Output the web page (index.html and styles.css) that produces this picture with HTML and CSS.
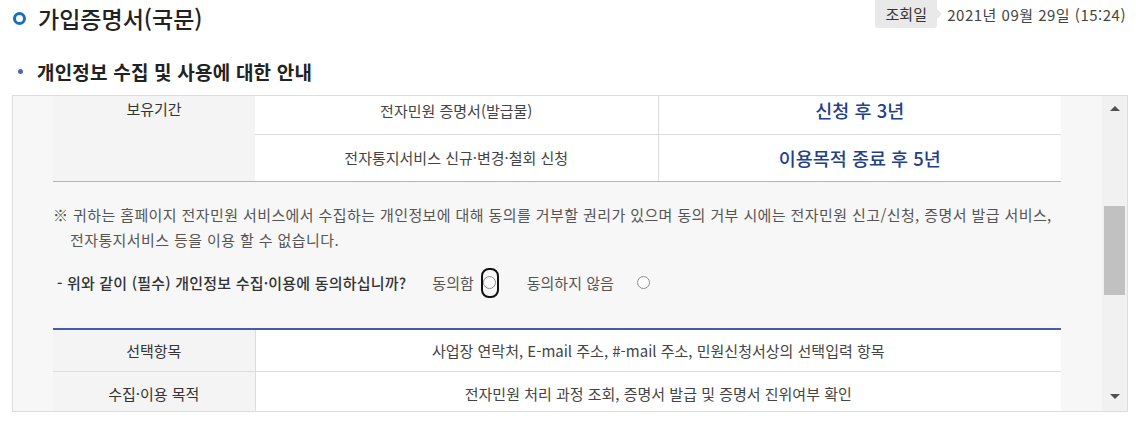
FILE: index.html
```html
<!DOCTYPE html>
<html lang="ko">
	<head>
		<meta charset="UTF-8">
		<title>가입증명서(국문)</title>
		<link rel="stylesheet" href="styles.css">
	</head>
	<body>
		<!--상단 제목-->
		<div class="head">
			<h1 class="title"><span class="ring"></span>가입증명서(국문)</h1>
			<div class="view-date">
				<span class="tag">조회일</span>
				<span class="date">2021년 09월 29일 (15:24)</span>
			</div>
		</div>

		<h2 class="sub-title"><span class="dot"></span>개인정보 수집 및 사용에 대한 안내</h2>

		<!--스크롤 박스-->
		<div class="box">
			<div class="view">
				<div class="inner">
					<table class="tbl tbl-keep">
						<tr>
							<th rowspan="2">보유기간</th>
							<td>전자민원 증명서(발급물)</td>
							<td class="em">신청 후 3년</td>
						</tr>
						<tr>
							<td>전자통지서비스 신규·변경·철회 신청</td>
							<td class="em">이용목적 종료 후 5년</td>
						</tr>
					</table>

					<p class="notice">※ 귀하는 홈페이지 전자민원 서비스에서 수집하는 개인정보에 대해 동의를 거부할 권리가 있으며 동의 거부 시에는 전자민원 신고/신청, 증명서 발급 서비스, 전자통지서비스 등을 이용 할 수 없습니다.</p>

					<div class="agree">
						<span class="question">- 위와 같이 (필수) 개인정보 수집·이용에 동의하십니까?</span>
						<label class="opt">동의함 <span class="radio focus"><i></i></span></label>
						<label class="opt opt-no">동의하지 않음 <span class="radio"><i></i></span></label>
					</div>

					<table class="tbl tbl-opt">
						<tr>
							<th>선택항목</th>
							<td>사업장 연락처, E-mail 주소, #-mail 주소, 민원신청서상의 선택입력 항목</td>
						</tr>
						<tr>
							<th>수집·이용 목적</th>
							<td>전자민원 처리 과정 조회, 증명서 발급 및 증명서 진위여부 확인</td>
						</tr>
					</table>
				</div>
			</div>
			<!--스크롤바-->
			<div class="scrollbar">
				<span class="arrow up"></span>
				<span class="thumb"></span>
				<span class="arrow down"></span>
			</div>
		</div>
	</body>
</html>
```

FILE: styles.css
```css
* {
	padding: 0;
	margin: 0;
	box-sizing: border-box;
}

body {
	width: 1136px;
	font-family: "Noto Sans CJK KR", "Noto Sans", sans-serif;
	color: #333;
	background: #fff;
}

/* 상단 */
.head {
	display: flex;
	justify-content: space-between;
	align-items: flex-start;
	padding: 0 10px 0 13px;
}

.title {
	display: flex;
	align-items: center;
	height: 36px;
	font-size: 23px;
	font-weight: 500;
	color: #222;
}

.ring {
	width: 13px;
	height: 13px;
	border: 3px solid #1a6ec2;
	border-radius: 50%;
	margin-right: 12px;
}

.view-date {
	display: flex;
	align-items: center;
	font-size: 15px;
}

.tag {
	position: relative;
	display: block;
	width: 62px;
	height: 28px;
	line-height: 28px;
	text-align: center;
	background: #e9e9e9;
	border-radius: 0 0 3px 3px;
	color: #333;
	margin-right: 10px;
}

/* 말풍선 꼬리 */
.tag::after {
	content: "";
	position: absolute;
	right: -5px;
	top: 9px;
	border-left: 5px solid #e9e9e9;
	border-top: 5px solid transparent;
	border-bottom: 5px solid transparent;
}

.date {
	color: #444;
	letter-spacing: 0.5px;
}

.sub-title {
	display: flex;
	align-items: center;
	height: 24px;
	margin-top: 23px;
	padding-left: 18px;
	font-size: 19px;
	font-weight: 700;
	letter-spacing: 0.2px;
	color: #222;
}

.dot {
	width: 5px;
	height: 5px;
	border-radius: 50%;
	background: #5563b8;
	margin-right: 14px;
}

/* 박스 */
.box {
	display: flex;
	width: 1116px;
	height: 317px;
	margin: 12px 0 0 12px;
	border: 1px solid #ddd;
}

.view {
	flex: 1;
	overflow: hidden;
	background: #f7f7f7;
}

.inner {
	margin-top: -9px;
	padding: 0 41px 0 40px;
}

.tbl {
	width: 100%;
	border-collapse: collapse;
	table-layout: fixed;
	font-size: 15px;
	color: #444;
}

.tbl th {
	width: 202px;
	font-weight: 400;
	color: #333;
	background: #f4f4f4;
}

.tbl td {
	text-align: center;
	background: #fff;
}

.tbl-keep tr {
	height: 47px;
}

.tbl-keep th {
	vertical-align: top;
	padding-top: 11px;
	border-bottom: 1px solid #b4b4b4;
}

.tbl-keep td {
	border-bottom: 1px solid #ddd;
}

.tbl-keep td + td {
	border-left: 1px solid #ddd;
}

.tbl-keep tr:last-child td {
	border-bottom: 1px solid #b4b4b4;
}

.tbl-keep .em {
	font-size: 18.5px;
	font-weight: 500;
	color: #23408a;
}

.notice {
	padding: 20px 0 0 17px;
	text-indent: -17px;
	font-size: 15px;
	line-height: 25px;
	letter-spacing: 0.4px;
	color: #555;
}

.agree {
	display: flex;
	align-items: center;
	height: 30px;
	margin-top: 16px;
	padding-left: 4px;
	font-size: 15px;
	color: #555;
}

.question {
	font-weight: 500;
	letter-spacing: 0.2px;
	color: #333;
	margin-right: 26px;
}

.opt {
	display: flex;
	align-items: center;
}

.opt-no {
	margin-left: 28px;
}

.radio {
	display: flex;
	align-items: center;
	justify-content: center;
	width: 18px;
	height: 30px;
	margin-left: 7px;
	border: 2px solid transparent;
	border-radius: 8px;
}

.opt-no .radio {
	margin-left: 21px;
}

.radio i {
	width: 13px;
	height: 13px;
	border: 1px solid #8d8d8d;
	border-radius: 50%;
	background: #fff;
}

.radio.focus {
	border-color: #111;
}

.tbl-opt {
	margin-top: 30px;
	border-top: 2px solid #4759b0;
}

.tbl-opt tr {
	height: 43px;
}

.tbl-opt th,
.tbl-opt td {
	border-bottom: 1px solid #ddd;
}

.tbl-opt td {
	border-left: 1px solid #ddd;
}

/* 스크롤바 */
.scrollbar {
	display: flex;
	flex-direction: column;
	align-items: center;
	width: 25px;
	background: #f1f1f1;
}

.arrow {
	display: block;
	width: 0;
	height: 0;
	border-left: 5px solid transparent;
	border-right: 5px solid transparent;
}

.arrow.up {
	margin-top: 10px;
	border-bottom: 5px solid #505050;
}

.arrow.down {
	margin-top: auto;
	margin-bottom: 12px;
	border-top: 5px solid #505050;
}

.thumb {
	display: block;
	width: 21px;
	height: 89px;
	margin-top: 95px;
	background: #c1c1c1;
}
```
